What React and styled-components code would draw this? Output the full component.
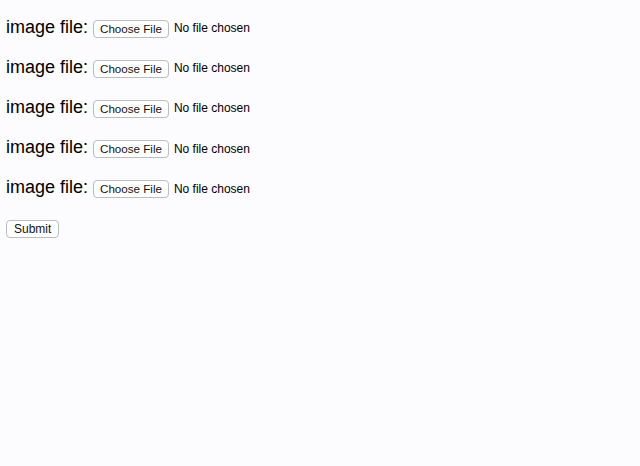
import React from 'react';
import styled, { createGlobalStyle } from 'styled-components';

const GlobalStyle = createGlobalStyle`
   html, body {
      margin    : 0;
      background: #fcfbfd;
   }
`;

const Form = styled.form`
   display       : flex;
   flex-direction: column;
   align-items   : flex-start;
   padding       : 8px 6px;
   font-family   : "Liberation Sans", Arial, sans-serif;
   color         : #000;
`;

const Row = styled.div`
   display    : flex;
   align-items: center;
   height     : 40.2px;
`;

const Label = styled.span`
   font-size   : 18px;
   margin-right: 5px;
   position    : relative;
   top         : -1px;
`;

const Button = styled.button`
   height       : 18px;
   padding      : 0 ${props => props.pad || 7}px;
   border       : 1px solid #bdbcbf;
   border-radius: 4px;
   background   : #fff;
   font-family  : "Liberation Sans", Arial, sans-serif;
   font-size    : ${props => props.size || 12}px;
   line-height  : 16px;
   color        : #111;
`;

const Status = styled.span`
   font-size  : 12px;
   margin-left: 5px;
`;

const HiddenInput = styled.input`
   display: none;
`;

function FileRow() {
   return (
      <Row>
         <Label>image file:</Label>
         <label>
            <HiddenInput type="file" />
            <Button type="button" pad={6} size={11.6}>Choose File</Button>
         </label>
         <Status>No file chosen</Status>
      </Row>
   );
}

export default function App() {
   return (
      <>
         <GlobalStyle />
         <Form onSubmit={e => e.preventDefault()}>
            {[0, 1, 2, 3, 4].map(i => <FileRow key={i} />)}
            <Row>
               <Button type="submit">Submit</Button>
            </Row>
         </Form>
      </>
   );
}
